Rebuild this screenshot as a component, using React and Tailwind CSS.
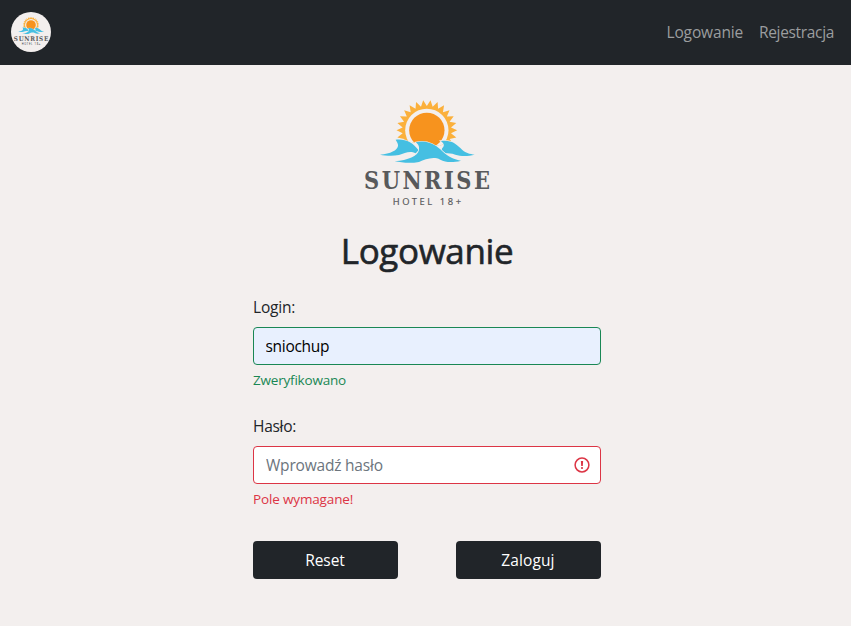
import React from "react";

const rays = Array.from({ length: 26 }, (_, i) => {
  const step = (Math.PI * 2) / 26;
  const a = i * step;
  const p = (r, t) => `${(230.5 + r * Math.cos(t)).toFixed(1)},${(121 + r * Math.sin(t)).toFixed(1)}`;
  return `${p(73, a - step / 2)} ${p(91, a)}`;
}).join(" ");

function Logo({ className }) {
  return (
    <svg viewBox="0 0 450 390" className={className} aria-label="Sunrise Hotel">
      <defs>
        <clipPath id="horizon">
          <path d="M100 0H360V153H295L270 168L200 158L150 152H100Z" />
        </clipPath>
      </defs>
      <g clipPath="url(#horizon)">
        <polygon points={rays} fill="#fbb03b" />
        <circle cx="230.5" cy="121" r="65" fill="#f3efee" />
        <circle cx="230.5" cy="121" r="53" fill="#f7931e" />
      </g>
      <g fill="#45bfe2" stroke="#f3efee" strokeWidth="4" paintOrder="stroke">
        <path d="M90 194C122 191 142 181 144 168C145 160 140 156 137 149C167 146 189 158 206 181L197 190C180 181 165 189 147 195C127 199 106 197 90 194Z" />
        <path d="M272 153C302 148 318 161 331 174C345 190 360 192 374 194C352 200 332 199 316 194C303 190 297 191 286 190C276 184 273 179 277 174C285 168 282 159 272 153Z" />
        <path d="M134 214C175 210 203 199 207 180C209 168 203 161 197 157C235 148 262 169 277 184C295 202 314 209 333 212C306 219 286 217 271 209C248 198 226 209 207 216C181 221 155 218 134 214Z" />
      </g>
      <text x="42" y="295.5" textLength="378" lengthAdjust="spacing" fill="#58595b" fontSize="70" fontWeight="700" fontFamily="'DejaVu Serif Condensed', 'DejaVu Serif', serif" fontStretch="condensed">SUNRISE</text>
      <text x="128" y="345" textLength="205" fill="#58595b" stroke="#58595b" strokeWidth="0.4" fontSize="28" fontWeight="400" fontFamily="'Noto Sans', sans-serif">HOTEL 18+</text>
    </svg>
  );
}

export default function App() {
  return (
    <div className="min-h-[626px] bg-[#f3efee] font-['Open_Sans',sans-serif] text-base text-[#212529]">
      <nav className="flex h-[65px] items-center justify-between bg-[#212529] pr-[17px] pl-[11px]">
        <a href="#" className="mb-px flex size-10 items-center justify-center overflow-hidden rounded-full bg-[#f3efee]">
          <Logo className="-ml-[1px] w-[41px] shrink-0" />
        </a>
        <div className="flex gap-4 text-[#9b9d9f]">
          <a href="#" className="w-[76.5px] text-[15.5px] tracking-[-0.15px] whitespace-nowrap">Logowanie</a>
          <a href="#" className="w-[75px] text-[15.5px] tracking-[-0.33px] whitespace-nowrap">Rejestracja</a>
        </div>
      </nav>
      <main className="mr-[250px] ml-[253px] w-[348px] pt-[25px]">
        <Logo className="mx-auto block h-[130px] w-[150px] -translate-x-[2px]" />
        <h1 className="mt-[7px] text-center text-[35px] leading-12 font-medium tracking-[-0.4px] [-webkit-text-stroke:0.6px_#212529]">Logowanie</h1>
        <form className="mt-[20px]" onSubmit={(e) => e.preventDefault()}>
          <label className="block h-6 text-[15.5px] leading-6 tracking-[-0.2px]">Login:</label>
          <input
            defaultValue="sniochup"
            className="mt-[8px] block h-[38px] w-full rounded-[4px] border border-[#198754] bg-[#e8f0fe] px-[11.5px] text-[15.5px] tracking-[-0.3px] text-black outline-none"
          />
          <div className="mt-[5px] h-[21px] text-[13.5px] leading-[21px] tracking-[-0.2px] text-[#198754]">Zweryfikowano</div>
          <label className="mt-[23px] block h-6 text-[15.5px] leading-6 tracking-[-0.3px]">Hasło:</label>
          <div className="mt-[8px] flex h-[38px] items-center rounded-[4px] border border-[#dc3545] bg-white pr-[10px] pl-3">
            <input
              type="password"
              placeholder="Wprowadź hasło"
              className="min-w-0 flex-1 pt-[2px] text-[15.5px] tracking-[-0.2px] outline-none placeholder:text-[#6c757d]"
            />
            <svg viewBox="0 0 16 16" className="size-4" fill="#dc3545">
              <circle cx="8" cy="8" r="6.9" fill="none" stroke="#dc3545" strokeWidth="1.5" />
              <path d="M6.9 4H9.1L8.8 9H7.2Z" />
              <circle cx="8" cy="11" r="1.1" />
            </svg>
          </div>
          <div className="mt-[5px] h-[21px] text-[13.5px] leading-[21px] tracking-[-0.15px] text-[#dc3545]">Pole wymagane!</div>
          <div className="mt-[31px] flex justify-between text-[15.5px] text-white">
            <button type="reset" className="h-[38px] w-[145px] rounded-[4px] bg-[#212529] pt-[2px] pr-px tracking-[-0.1px]">Reset</button>
            <button type="submit" className="h-[38px] w-[145px] rounded-[4px] bg-[#212529] pt-[2px] pr-px tracking-[0.1px]">Zaloguj</button>
          </div>
        </form>
      </main>
    </div>
  );
}
